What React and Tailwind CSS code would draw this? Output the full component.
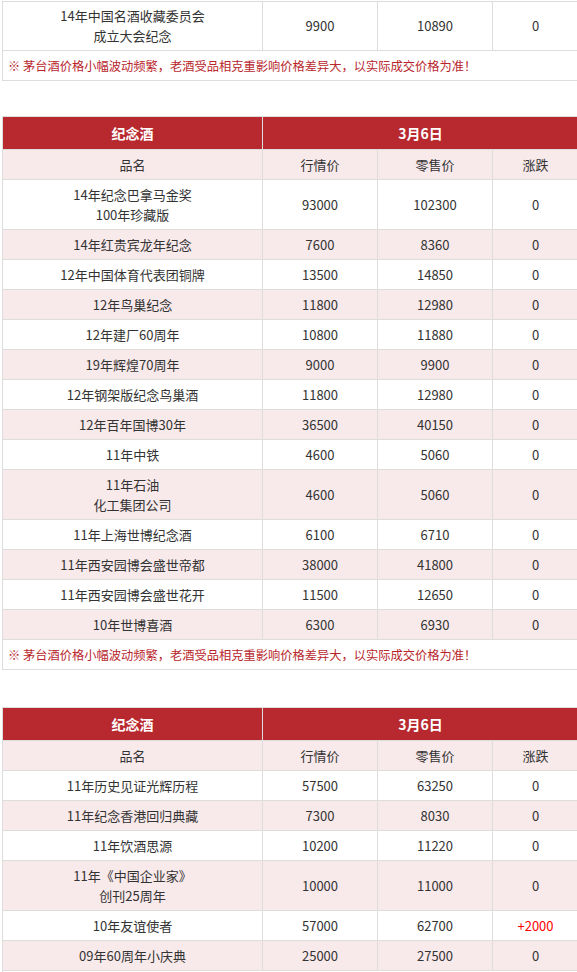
import React from "react";

const NOTE = "※ 茅台酒价格小幅波动频繁，老酒受品相克重影响价格差异大，以实际成交价格为准！";

const table2 = [
  [["14年纪念巴拿马金奖", "100年珍藏版"], "93000", "102300", "0"],
  [["14年红贵宾龙年纪念"], "7600", "8360", "0"],
  [["12年中国体育代表团铜牌"], "13500", "14850", "0"],
  [["12年鸟巢纪念"], "11800", "12980", "0"],
  [["12年建厂60周年"], "10800", "11880", "0"],
  [["19年辉煌70周年"], "9000", "9900", "0"],
  [["12年钢架版纪念鸟巢酒"], "11800", "12980", "0"],
  [["12年百年国博30年"], "36500", "40150", "0"],
  [["11年中铁"], "4600", "5060", "0"],
  [["11年石油", "化工集团公司"], "4600", "5060", "0"],
  [["11年上海世博纪念酒"], "6100", "6710", "0"],
  [["11年西安园博会盛世帝都"], "38000", "41800", "0"],
  [["11年西安园博会盛世花开"], "11500", "12650", "0"],
  [["10年世博喜酒"], "6300", "6930", "0"],
];

const table3 = [
  [["11年历史见证光辉历程"], "57500", "63250", "0"],
  [["11年纪念香港回归典藏"], "7300", "8030", "0"],
  [["11年饮酒思源"], "10200", "11220", "0"],
  [["11年《中国企业家》", "创刊25周年"], "10000", "11000", "0"],
  [["10年友谊使者"], "57000", "62700", "+2000"],
  [["09年60周年小庆典"], "25000", "27500", "0"],
];

const font = { fontFamily: '"Noto Sans CJK SC", "Noto Sans", sans-serif' };

function Cols() {
  return (
    <colgroup>
      <col className="w-[260px]" />
      <col className="w-[115px]" />
      <col className="w-[115px]" />
      <col className="w-[86px]" />
    </colgroup>
  );
}

function Cell({ children, className = "", ...rest }) {
  return (
    <td
      className={
        "border border-[#dddddd] text-center align-middle px-1 py-[4.5px] leading-[20px] text-[13px] text-[#333333] " +
        className
      }
      {...rest}
    >
      {children}
    </td>
  );
}

function DataRow({ row, idx, first }) {
  const [name, a, b, c] = row;
  const bg = idx % 2 === 1 ? "bg-[#f8e9ea]" : "bg-white";
  const pad = first ? "!py-[4px]" : "";
  return (
    <tr className={bg}>
      <Cell className={pad}>
        {name.map((l, i) => (
          <div key={i}>{l}</div>
        ))}
      </Cell>
      <Cell className={pad}>{a}</Cell>
      <Cell className={pad}>{b}</Cell>
      <Cell className={pad + (c.startsWith("+") ? " !text-[#ff0000]" : "")}>{c}</Cell>
    </tr>
  );
}

function NoteRow() {
  return (
    <tr className="bg-white">
      <td
        colSpan={4}
        className="border border-[#dddddd] text-left px-[5px] py-[4.5px] leading-[20px] text-[12.25px] text-[#b8262c] whitespace-nowrap"
      >
        {NOTE}
      </td>
    </tr>
  );
}

function Header() {
  return (
    <>
      <tr className="bg-[#b8292f]">
        <td className="border border-[#dddddd] text-center py-[6px] leading-[20px] text-[14px] font-bold text-white">
          纪念酒
        </td>
        <td
          colSpan={3}
          className="border border-[#dddddd] text-center py-[6px] leading-[20px] text-[14px] font-bold text-white"
        >
          3月6日
        </td>
      </tr>
      <tr className="bg-[#f8e9ea]">
        <Cell>品名</Cell>
        <Cell>行情价</Cell>
        <Cell>零售价</Cell>
        <Cell>涨跌</Cell>
      </tr>
    </>
  );
}

function Table({ rows, header = true, note = true, firstShort = false, className = "" }) {
  return (
    <table className={"table-fixed border-collapse w-[577px] " + className}>
      <Cols />
      <tbody>
        {header && <Header />}
        {rows.map((r, i) => (
          <DataRow key={i} row={r} idx={i} first={firstShort && i === 0} />
        ))}
        {note && <NoteRow />}
      </tbody>
    </table>
  );
}

export default function App() {
  return (
    <div className="w-[577px] h-[972px] overflow-hidden bg-white" style={font}>
      <div className="pl-[2px] pt-[1px] w-[600px]">
        <Table
          header={false}
          firstShort
          rows={[[["14年中国名酒收藏委员会", "成立大会纪念"], "9900", "10890", "0"]]}
        />
        <Table rows={table2} className="mt-[35px]" />
        <Table rows={table3} className="mt-[37px]" />
      </div>
    </div>
  );
}
